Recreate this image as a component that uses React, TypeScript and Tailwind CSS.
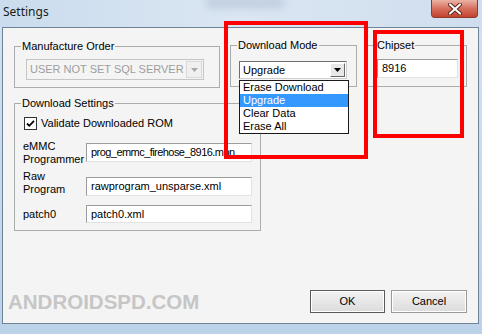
import React from "react"

const ui = "font-['Liberation_Sans',Arial,sans-serif] text-[11px] text-black"

function GroupBox({ title, className, bodyClassName, legendClassName, children }: { title: string; className?: string; bodyClassName?: string; legendClassName?: string; children?: React.ReactNode }) {
    return (
        <fieldset className={`border border-[#acacac] ${className ?? ""}`}>
            <legend className={`px-[1px] leading-[14px] ${legendClassName ?? "ml-[6px]"}`}>{title}</legend>
            <div className={bodyClassName}>{children}</div>
        </fieldset>
    )
}

function TextBox({ value, className }: { value: string; className?: string }) {
    return (
        <div className={`flex items-center whitespace-nowrap bg-white border border-t-[#9c9c9c] border-l-[#9c9c9c] border-r-[#e2e2e2] border-b-[#e2e2e2] pl-[4px] ${className ?? ""}`}>
            {value}
        </div>
    )
}

function Arrow({ color }: { color: string }) {
    return (
        <svg width="7" height="4" viewBox="0 0 7 4">
            <path d="M0 0h7L3.5 4z" fill={color} />
        </svg>
    )
}

export default function App() {
    return (
        <div className={`relative w-[482px] h-[334px] overflow-hidden flex flex-col bg-gradient-to-b from-[#d3e2f1] to-[#bcd2e9] ${ui}`}>
            {/* Title bar */}
            <div className="relative h-[27px] shrink-0 flex items-start bg-gradient-to-r from-[#cadcee] via-[#dbe6f2] to-[#cfdeee]">
                <div className="absolute left-[205px] top-[-2px] w-[80px] h-[10px] rounded-full bg-[#93a8be] opacity-40 blur-[4px]" />
                <span className="relative mt-[4px] ml-[3px] font-['Noto_Sans',sans-serif] text-[12px] leading-[16px] text-[#1b1b1b]">Settings</span>
                <button className="relative ml-auto mr-[4px] w-[47px] h-[18px] rounded-b-[4px] border border-t-0 border-[#8e3a2d] bg-gradient-to-b from-[#eab4a7] via-[#d66f5d] to-[#c3412c] flex items-center justify-center">
                    <svg width="14" height="12" viewBox="0 0 14 12">
                        <path d="M2 1.5l10 9M12 1.5l-10 9" stroke="#5a2018" strokeWidth="4" strokeLinecap="round" />
                        <path d="M2 1.5l10 9M12 1.5l-10 9" stroke="#ffffff" strokeWidth="2.2" strokeLinecap="round" />
                    </svg>
                </button>
            </div>

            {/* Client area */}
            <div className="ml-[2px] w-[477px] h-[297px] shrink-0 flex flex-col border border-[#6f8397] bg-[#f4f4f4] pl-[11px] pr-[11px] pt-[10px]">
                <div className="flex items-start">
                    <GroupBox title="Manufacture Order" className="mt-[1px] w-[206px] h-[49px]" bodyClassName="pl-[11px]">
                        <div className="mt-[6px] w-[178px] h-[21px] flex items-center border border-[#c5c5c5] bg-[#f4f4f4] pl-[3px] text-[#9d9d9d]">
                            USER NOT SET SQL SERVER
                            <div className="ml-auto mr-[1px] w-[16px] h-[17px] flex items-center justify-center border border-[#d8d8d8] bg-[#f0f0f0]">
                                <Arrow color="#a8a8a8" />
                            </div>
                        </div>
                    </GroupBox>
                    <GroupBox title="Download Mode" className="ml-[10px] w-[127px] h-[49px]" bodyClassName="pl-[8px]">
                        <div className="relative mt-[9px] w-[108px] h-[18px] flex items-center bg-white border border-t-[#6d6d6d] border-l-[#6d6d6d] border-r-[#cfcfcf] border-b-[#cfcfcf] pl-[3px]">
                            Upgrade
                            <div className="ml-auto mr-[1px] w-[15px] h-[14px] flex items-center justify-center bg-[#e8e8e8] border border-t-[#ffffff] border-l-[#ffffff] border-r-[#696969] border-b-[#696969]">
                                <Arrow color="#000000" />
                            </div>
                            {/* Open dropdown list */}
                            <div className="absolute left-[-1px] top-[18px] w-[110px] border border-[#1a1a1a] bg-white leading-[13px]">
                                <div className="h-[13px] pl-[3px]">Erase Download</div>
                                <div className="h-[13px] pl-[3px] bg-[#3399ff] text-white">Upgrade</div>
                                <div className="h-[13px] pl-[3px]">Clear Data</div>
                                <div className="h-[13px] pl-[3px]">Erase All</div>
                            </div>
                        </div>
                    </GroupBox>
                    <GroupBox title="Chipset" className="ml-[9px] w-[101px] h-[49px]" legendClassName="ml-[9px]" bodyClassName="pl-[10px]">
                        <TextBox value="8916" className="mt-[7px] w-[81px] h-[19px] pl-[2px]" />
                    </GroupBox>
                </div>

                <GroupBox title="Download Settings" className="mt-[8px] w-[247px] h-[135px]" bodyClassName="pl-[8px]">
                    <div className="mt-[7px] ml-[1px] flex items-center h-[13px]">
                        <div className="w-[13px] h-[13px] border border-[#333333] bg-white flex items-center justify-center">
                            <svg width="9" height="9" viewBox="0 0 9 9">
                                <path d="M1 4.5l2.3 2.3L8 1.8" stroke="#000" strokeWidth="1.8" fill="none" />
                            </svg>
                        </div>
                        <span className="ml-[4px]">Validate Downloaded ROM</span>
                    </div>
                    <div className="mt-[10px] flex items-start">
                        <div className="w-[63px] leading-[13px]">eMMC<br />Programmer</div>
                        <TextBox value="prog_emmc_firehose_8916.mbn" className="mt-[3px] w-[166px] h-[19px] tracking-[-0.55px]" />
                    </div>
                    <div className="mt-[4px] flex items-start">
                        <div className="w-[63px] leading-[13px]">Raw<br />Program</div>
                        <TextBox value="rawprogram_unsparse.xml" className="mt-[7px] w-[166px] h-[19px]" />
                    </div>
                    <div className="mt-[9px] flex items-start">
                        <div className="w-[63px] mt-[3px] leading-[13px]">patch0</div>
                        <TextBox value="patch0.xml" className="w-[166px] h-[18px]" />
                    </div>
                </GroupBox>

                <div className="mt-auto mb-[10px] flex items-center">
                    <span className="ml-[-6px] font-bold text-[20.5px] leading-[22px] text-[#c6c6c6]">ANDROIDSPD.COM</span>
                    <button className="ml-auto w-[75px] h-[23px] border border-[#5a5a5a] bg-gradient-to-b from-[#f2f2f2] to-[#dcdcdc] shadow-[inset_0_0_0_1px_#ffffff]">OK</button>
                    <button className="ml-[6px] w-[76px] h-[23px] border border-[#9a9a9a] bg-gradient-to-b from-[#f2f2f2] to-[#dcdcdc] shadow-[inset_0_0_0_1px_#ffffff]">Cancel</button>
                </div>
            </div>

            {/* Red annotation boxes */}
            <div className="absolute left-[224px] top-[21px] w-[144px] h-[138px] border-[4px] border-[#ff0000]" />
            <div className="absolute left-[373px] top-[30px] w-[91px] h-[108px] border-[4px] border-[#ff0000]" />
        </div>
    )
}
